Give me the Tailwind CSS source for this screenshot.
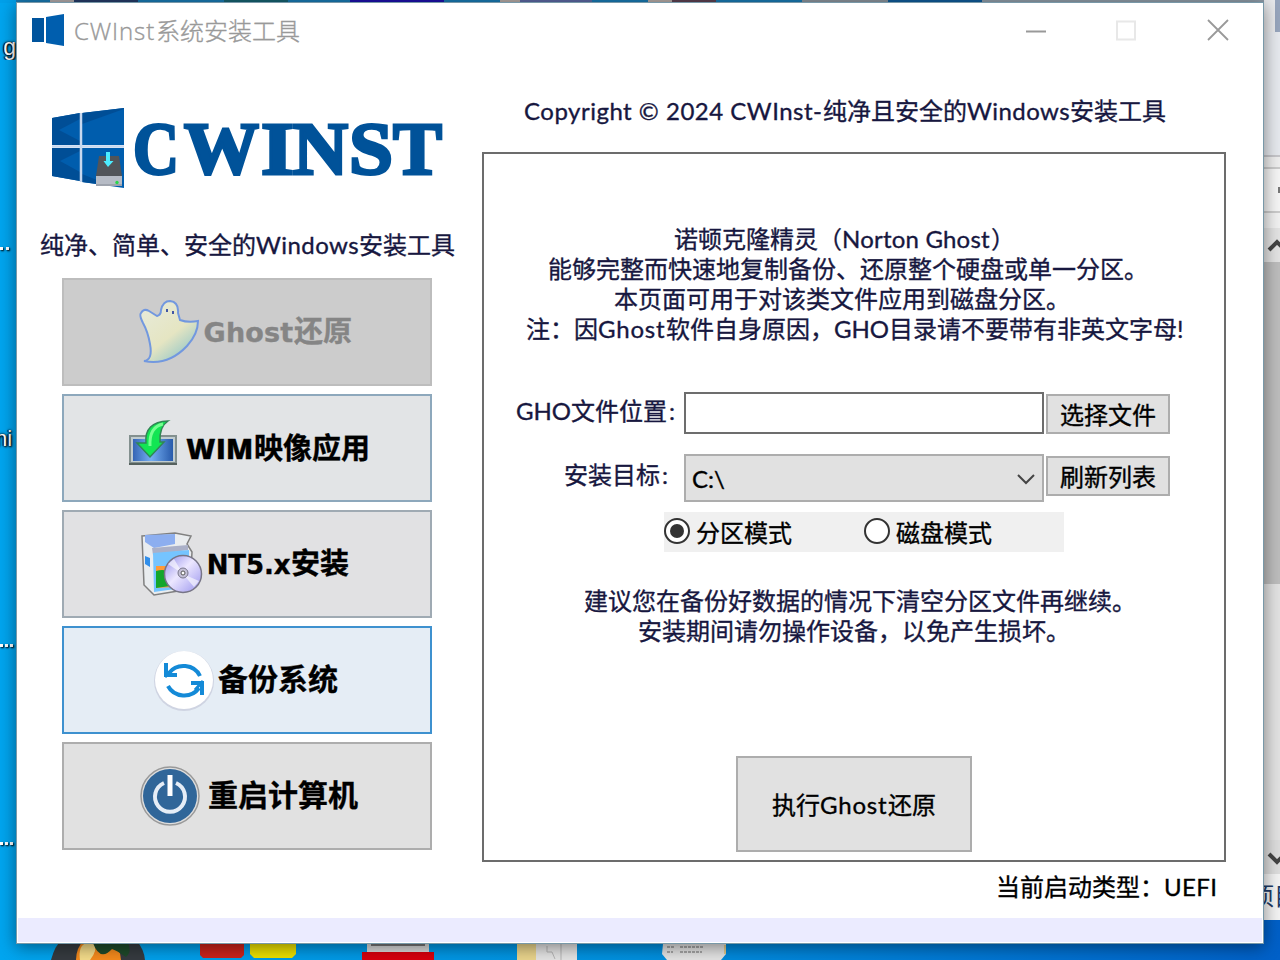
<!DOCTYPE html>
<html lang="zh-CN">
<head>
<meta charset="utf-8">
<title>CWInst系统安装工具</title>
<script src="https://cdn.jsdelivr.net/npm/@tailwindcss/browser@4"></script>
</head>
<body class="relative h-[960px] w-[1280px] overflow-hidden bg-gradient-to-r from-[#00a5ef] via-[#0090df] to-[#0160c8] font-['Lato','Noto_Sans_CJK_SC',sans-serif] text-[24px] leading-[30px] text-[#17173f]">

<!-- desktop, top edge -->
<div class="absolute left-0 top-0 flex h-[3px] w-[1280px] bg-[#1878b0]">
  <div class="w-[16px] bg-[#00a0ea]"></div><div class="ml-[34px] w-[24px] bg-[#b0a8a8]"></div><div class="w-[64px] bg-[#243a66]"></div>
  <div class="ml-[86px] w-[64px] bg-[#16606e]"></div><div class="ml-[62px] w-[94px] bg-[#1c10a8]"></div><div class="ml-[56px] w-[20px] bg-[#b5a9a4]"></div><div class="w-[72px] bg-[#5a66a0]"></div>
  <div class="ml-[56px] w-[24px] bg-[#b5a9a4]"></div><div class="w-[44px] bg-[#5b4050]"></div><div class="ml-[86px] w-[86px] bg-[#8a929a]"></div><div class="w-[94px] bg-[#0f5a98]"></div><div class="flex-1 bg-[#8d9aa6]"></div>
</div>

<!-- desktop label fragments, left edge -->
<div class="absolute left-0 top-[34px] w-[16px] overflow-hidden text-right font-['Liberation_Sans'] text-[23px] leading-[26px] text-white [text-shadow:1px_1px_2px_#000,-1px_0_1px_#000,0_0_3px_#000]">g</div>
<div class="absolute left-0 top-[426px] w-[16px] overflow-hidden font-['Liberation_Sans'] text-[22px] leading-[26px] text-white [text-shadow:1px_1px_2px_#000,-1px_0_1px_#000,0_0_3px_#000]"><span class="-ml-[5px]">ni</span></div>
<div class="absolute left-0 top-[247px] flex gap-[3px]"><i class="size-[3px] bg-white shadow-[1px_1px_2px_#000]"></i><i class="size-[3px] bg-white shadow-[1px_1px_2px_#000]"></i></div>
<div class="absolute left-0 top-[644px] flex gap-[2px]"><i class="size-[3px] bg-white shadow-[1px_1px_2px_#000]"></i><i class="size-[3px] bg-white shadow-[1px_1px_2px_#000]"></i><i class="size-[3px] bg-white shadow-[1px_1px_2px_#000]"></i></div>
<div class="absolute left-0 top-[842px] flex gap-[2px]"><i class="size-[3px] bg-white shadow-[1px_1px_2px_#000]"></i><i class="size-[3px] bg-white shadow-[1px_1px_2px_#000]"></i><i class="size-[3px] bg-white shadow-[1px_1px_2px_#000]"></i></div>

<!-- window behind, right edge -->
<div class="absolute left-[1264px] top-0 flex h-[920px] w-[16px] flex-col bg-[#f3f3f3]">
  <div class="flex h-[32px] justify-end bg-[#e8e9ec]"><div class="w-[5px] bg-[#97a5bd]"></div></div>
  <div class="h-[125px] border-b-2 border-[#c6c6ca] bg-[#e6e9ee]"></div>
  <div class="h-[12px] border-b-2 border-[#cbcbcb] bg-[#eeeeee]"></div>
  <div class="flex h-[44px] items-center justify-end border-b-2 border-[#cbcbcb] bg-[#f5f5f5]"><div class="h-[6px] w-[2px] bg-[#777777]"></div></div>
  <div class="h-[15px] bg-[#f1f1f1]"></div>
  <div class="h-[34px] bg-[#e3e3e3]"><svg class="h-[34px] w-[16px]" viewBox="0 0 16 34" fill="none" stroke="#444" stroke-width="4"><path d="M5 22L13 14L21 22"/></svg></div>
  <div class="h-[322px] bg-[#bdbdbd]"></div>
  <div class="h-[256px] bg-[#e2e2e2]"></div>
  <div class="h-[34px] bg-[#dddddd]"><svg class="h-[34px] w-[16px]" viewBox="0 0 16 34" fill="none" stroke="#444" stroke-width="4"><path d="M5 14L13 22L21 14"/></svg></div>
  <div class="flex-1 overflow-hidden whitespace-nowrap pt-[7px] text-[24px] text-[#203a66]"><span class="-ml-[14px]">项目</span></div>
</div>

<!-- desktop icons, bottom edge -->
<svg class="absolute left-0 top-[940px]" width="760" height="20" viewBox="0 0 760 20">
  <path d="M51 20Q55 5 62 0H136Q144 9 145 20Z" fill="#363b40"/><path d="M76 20Q76 8 84 0H110Q120 6 121 20Z" fill="#f58a1c"/><path d="M80 20Q78 6 86 3H94Q98 10 90 20Z" fill="#f4dc8a"/><path d="M93 3H128Q132 12 126 17Q116 10 112 9Q100 22 93 3Z" fill="#1e4a2a"/>
  <path d="M200 4H244V15L241 18H203L200 15Z" fill="#cc231b"/><path d="M250 4H296V14L292 18H254L250 14Z" fill="#ebe000"/>
  <path d="M367 4H429V13H367Z" fill="#d9d9d9"/><path d="M371 4H425V6H371Z" fill="#777"/><path d="M362 12H434V20H362Z" fill="#d8000d"/>
  <path d="M517 4H536V20H517Z" fill="#e9d48c"/><path d="M536 4H577V20H536Z" fill="#e4e4e4"/><path d="M547 6V12H552L555 19M561 4V20" fill="none" stroke="#b5b5b5"/>
  <path d="M663 4H726V14L721 20H667L662 14Z" fill="#e3e3e3"/><path d="M667 7H674M667 12H673M680 7H704M680 12H702" stroke="#a4a4a4" stroke-width="2" stroke-dasharray="3 1"/><path d="M725 5V14" stroke="#dfc98c" stroke-width="2"/>
</svg>

<!-- application window -->
<div class="absolute left-[16px] top-[2px] flex h-[942px] w-[1248px] flex-col border border-[#7898a8] bg-white shadow-[0_3px_16px_rgba(0,0,0,0.45)]">
  <header class="flex h-[57px] shrink-0 items-center pb-[3px] pl-[15px] text-[#999999]">
    <svg class="h-[34px] w-[32px]" viewBox="0 0 32 34"><path d="M0 5H12V29H0Z" fill="#00549d"/><path d="M14 4L32 1V33L14 30Z" fill="#005eae"/></svg>
    <div class="ml-[10px] w-[226px] whitespace-nowrap pt-[2px] font-['Open_Sans','Noto_Sans_CJK_SC',sans-serif] text-[24px] font-light [-webkit-text-stroke:0.35px_#999999]"><span class="inline-block w-[82px] tracking-[0.9px]">CWInst</span>系统安装工具</div>
    <svg class="ml-[726px] h-[24px] w-[204px]" viewBox="0 0 204 24" fill="none" stroke="#999999"><path d="M0 13.5H20" stroke-width="2"/><path d="M91 3.5H109V21.5H91Z" stroke="#e8e8e8" stroke-width="2"/><path d="M182 2L202 22M202 2L182 22" stroke-width="1.8"/></svg>
  </header>

  <main class="flex flex-1 pl-[24px] [-webkit-text-stroke:0.35px_currentColor]">
    <!-- navigation -->
    <section class="flex w-[441px] flex-col">
      <svg class="mt-[46px] h-[84px] w-[404px] shrink-0" viewBox="41 106 404 84">
        <path d="M52 118L80 113V145H52ZM82 113L124 108V145H82ZM52 148H80V181L52 176ZM82 148H124V188L82 182Z" fill="#005dad"/>
        <path d="M52 118L80 113V119L59 130L80 141V145H52ZM82 113L124 108V109L82 124ZM52 148H80V151L60 161L80 172V181L52 176ZM82 174L97 180V184L82 182Z" fill="#004e96"/>
        <path d="M81 113V182M52 146.500H124" stroke="#c7d8ef" stroke-width="2.500"/>
        <path d="M99 156H119L122 176H96Z" fill="#515459"/><path d="M96 176H122V186H96Z" fill="#b6bbc5"/><path d="M96 185H122" stroke="#858b95"/><circle cx="117" cy="182.500" r="1.700" fill="#2bd64c"/>
        <path d="M106 152H110V161H113.500L108 167L103.500 161H106Z" fill="#4cecff"/>
        <g font-family="'Liberation Serif'" font-weight="700" font-size="75" fill="#005299" stroke="#005299" stroke-width="3">
          <text x="133" y="174" textLength="46" lengthAdjust="spacingAndGlyphs">C</text>
          <text x="184" y="174" textLength="75" lengthAdjust="spacingAndGlyphs">W</text>
          <text x="261" y="174" textLength="33" lengthAdjust="spacingAndGlyphs">I</text>
          <text x="293" y="174" textLength="55" lengthAdjust="spacingAndGlyphs">N</text>
          <text x="349" y="174" textLength="44" lengthAdjust="spacingAndGlyphs">S</text>
          <text x="393" y="174" textLength="49" lengthAdjust="spacingAndGlyphs">T</text>
        </g>
      </svg>
      <p class="mt-[40px] -translate-x-px whitespace-nowrap">纯净、简单、安全的<span class="inline-block w-[103px] tracking-[0.45px]">Windows</span>安装工具</p>
      <nav class="ml-[21px] mt-[18px] flex w-[370px] flex-col gap-2 font-['DejaVu_Sans','Noto_Sans_CJK_SC',sans-serif] text-[30px] font-bold text-black">
        <button class="flex h-[108px] items-center border-2 border-[#bdbdbd] bg-[#cccccc] pl-[75px] text-[#858585]">
          <svg class="h-[66px] w-[62px] shrink-0" viewBox="0 0 62 66"><defs><linearGradient id="ghost" x1=".2" y1="0" x2=".8" y2=".8"><stop offset="0" stop-color="#e7ead8"/><stop offset=".65" stop-color="#e5e5c2"/><stop offset="1" stop-color="#a8cec6"/></linearGradient></defs>
          <path d="M2 14Q5 9 10 12L18 17Q22 16 22 11Q24 2 31 2Q40 3 39 14L41 21Q49 24 59 22Q59 35 48 47Q29 67 5 62Q14 61 11 45Q9 33 4 24Q0 16 2 14Z" fill="url(#ghost)" stroke="#7298df" stroke-width="2"/><path d="M28 10V13M34 12V15" stroke="#4257a5" stroke-width="2"/></svg>
          <span class="ml-[2px] whitespace-nowrap"><span class="inline-block w-[91px] text-[27px] tracking-[0.2px]">Ghost</span><span class="text-[29px]">还原</span></span>
        </button>
        <button class="flex h-[108px] items-center border-2 border-[#8da8bc] bg-[#e2e4e6] pl-[65px]">
          <svg class="h-[46px] w-[48px] shrink-0 -translate-y-[5px]" viewBox="0 0 48 46"><defs><linearGradient id="screen"><stop stop-color="#3565b5"/><stop offset=".45" stop-color="#74aef1"/><stop offset="1" stop-color="#275aab"/></linearGradient></defs><path d="M1 16H47V43H1Z" fill="#c0ccd0" stroke="#83908f" stroke-width="2"/><path d="M4 19H44V41H4Z" fill="url(#screen)"/><path d="M0 44H48" stroke="#55615e" stroke-width="2"/><path d="M39 1Q30 7 31 22H35L21 37L8 23H17Q15 2 39 1Z" fill="#12e553" stroke="#318655" stroke-width="1.500"/><path d="M34 4Q20 7 21 26" fill="none" stroke="#75ff91" stroke-width="3"/></svg>
          <span class="ml-[9px] whitespace-nowrap"><span class="inline-block w-[68px] font-['Open_Sans'] text-[28px] font-extrabold tracking-[0.5px]">WIM</span><span class="text-[29px]">映像应用</span></span>
        </button>
        <button class="flex h-[108px] items-center border-2 border-[#9faab3] bg-[#e1e1e3] pl-[76px]">
          <svg class="h-[64px] w-[64px] shrink-0" viewBox="0 0 64 64"><defs><linearGradient id="disc" x2="1" y2="1"><stop stop-color="#8d89e8"/><stop offset=".45" stop-color="#ece7ff"/><stop offset="1" stop-color="#9792ed"/></linearGradient></defs><path d="M2 4L35 1L51 4L47 12L52 20L50 57L14 63L4 53Z" fill="#e9ecef" stroke="#808080" stroke-width="1.500"/><path d="M5 3L35 2V12L14 16L5 10Z" fill="#8caef0"/><path d="M12 16L48 13V18L13 23Z" fill="#aab0c8"/><path d="M13 21L49 18V55L14 60Z" fill="#75c4ff"/><path d="M5 24L10 26V35L5 32Z" fill="#318eea"/><path d="M16 34H34V55L16 56Z" fill="#ff9a38"/><path d="M16 39Q25 36 30 41V54L16 56Z" fill="#13a62b"/><circle cx="43" cy="42" r="18.500" fill="url(#disc)" stroke="#777587" stroke-width="1.500"/><path d="M43 42L28 32L34 27ZM43 42L59 49L54 55Z" fill="#fff" opacity=".6"/><circle cx="43" cy="41" r="5" fill="#c4c0d6" stroke="#77758a"/><circle cx="43" cy="41" r="2" fill="#fff" stroke="#555"/></svg>
          <span class="ml-[2px] whitespace-nowrap"><span class="inline-block w-[85px] text-[26px] tracking-[-0.1px]">NT5.x</span><span class="text-[29px]">安装</span></span>
        </button>
        <button class="flex h-[108px] items-center border-2 border-[#3e91cf] bg-[#e5edf5] pl-[89px]">
          <svg class="h-[62px] w-[62px] shrink-0" viewBox="0 0 62 62"><circle cx="31" cy="32" r="30" fill="#cfd4e2"/><circle cx="31" cy="31" r="29" fill="#fff"/><path d="M16 24A18 17 0 0 1 47 27M15 37A18 17 0 0 0 46 39" fill="none" stroke="#148ad7" stroke-width="4"/><path d="M13 14V26H24M38 34H49V46" fill="none" stroke="#148ad7" stroke-width="4"/><path d="M12 28L20 20M50 32L42 41" stroke="#148ad7" stroke-width="3"/></svg>
          <span class="ml-[3px] whitespace-nowrap">备份系统</span>
        </button>
        <button class="flex h-[108px] items-center border-2 border-[#adadad] bg-[#e1e1e1] pl-[76px]">
          <svg class="h-[60px] w-[60px] shrink-0" viewBox="0 0 60 60"><circle cx="30" cy="30" r="29" fill="#dedede" stroke="#999" stroke-width="1.500"/><circle cx="30" cy="30" r="27" fill="#306699"/><path d="M24 17A15 15 0 1 0 36 17" fill="none" stroke="#e5edf6" stroke-width="4"/><path d="M30 9V30" stroke="#fff" stroke-width="5"/></svg>
          <span class="ml-[8px] whitespace-nowrap">重启计算机</span>
        </button>
      </nav>
    </section>

    <!-- restore page -->
    <section class="flex w-[744px] flex-col">
      <h1 class="h-[92px] whitespace-nowrap pl-[42px] pt-[36px]"><span class="inline-block w-[299px] tracking-[0.5px]">Copyright © 2024 CWInst-</span>纯净且安全的<span class="inline-block w-[103px] tracking-[0.45px]">Windows</span>安装工具</h1>
      <div class="flex h-[710px] flex-col border-2 border-[#6c6c6c]">
        <div class="mt-[70px] whitespace-nowrap">
          <p class="pl-[190px]">诺顿克隆精灵（<span class="inline-block w-[149px] tracking-[0.2px]">Norton Ghost</span>）</p>
          <p class="pl-[64px]">能够完整而快速地复制备份、还原整个硬盘或单一分区。</p>
          <p class="pl-[130px]">本页面可用于对该类文件应用到磁盘分区。</p>
          <p class="pl-[42px]">注：因<span class="inline-block w-[68px] tracking-[0.8px]">Ghost</span>软件自身原因，<span class="inline-block w-[55px]">GHO</span>目录请不要带有非英文字母!</p>
        </div>
        <div class="mt-[48px] flex h-[42px] pl-[32px]">
          <label class="w-[168px] whitespace-nowrap pt-[4px]"><span class="inline-block w-[55px]">GHO</span>文件位置<span class="ml-[2px]">:</span></label>
          <div class="h-[42px] w-[360px] border-2 border-[#6d6d6d] bg-white"></div>
          <button class="ml-[2px] mt-[2px] h-[40px] w-[124px] border-2 border-[#adadad] bg-[#e1e1e1] pt-px text-black">选择文件</button>
        </div>
        <div class="mt-[20px] flex h-[48px] pl-[80px]">
          <label class="w-[120px] whitespace-nowrap pt-[6px]">安装目标<span class="ml-[2px]">:</span></label>
          <div class="flex h-[48px] w-[360px] items-center justify-between border-2 border-[#adadad] bg-[#e1e1e1] pl-[6px] pr-[7px] pt-px text-black"><span>C:\</span><svg class="h-[12px] w-[18px]" viewBox="0 0 18 12" fill="none" stroke="#444" stroke-width="2"><path d="M1 2L9 10L17 2"/></svg></div>
          <button class="ml-[2px] mt-[2px] h-[40px] w-[124px] border-2 border-[#adadad] bg-[#e1e1e1] pt-px text-black">刷新列表</button>
        </div>
        <div class="ml-[180px] mt-[10px] flex h-[40px] w-[400px] bg-[#f0f0f0] text-black">
          <label class="flex w-[200px] gap-[6px] pt-[6px]"><span class="flex size-[26px] items-center justify-center rounded-full border-2 border-[#333333] bg-white"><i class="size-[14px] rounded-full bg-[#333333]"></i></span>分区模式</label>
          <label class="flex gap-[6px] pt-[6px]"><span class="size-[26px] rounded-full border-2 border-[#333333] bg-white"></span>磁盘模式</label>
        </div>
        <div class="mt-[34px] whitespace-nowrap"><p class="pl-[100px]">建议您在备份好数据的情况下清空分区文件再继续。</p><p class="pl-[154px]">安装期间请勿操作设备，以免产生损坏。</p></div>
        <button class="ml-[252px] mt-[110px] h-[96px] w-[236px] shrink-0 whitespace-nowrap border-2 border-[#adadad] bg-[#e1e1e1] pt-px text-black">执行<span class="inline-block w-[68px] text-left tracking-[0.8px]">Ghost</span>还原</button>
      </div>
      <p class="whitespace-nowrap pl-[514px] pt-[10px] text-black">当前启动类型：<span class="tracking-[0.4px]">UEFI</span></p>
    </section>
  </main>
  <footer class="mx-[1px] mb-[1px] h-[24px] shrink-0 bg-[#ebebff]"></footer>
</div>
</body>
</html>
